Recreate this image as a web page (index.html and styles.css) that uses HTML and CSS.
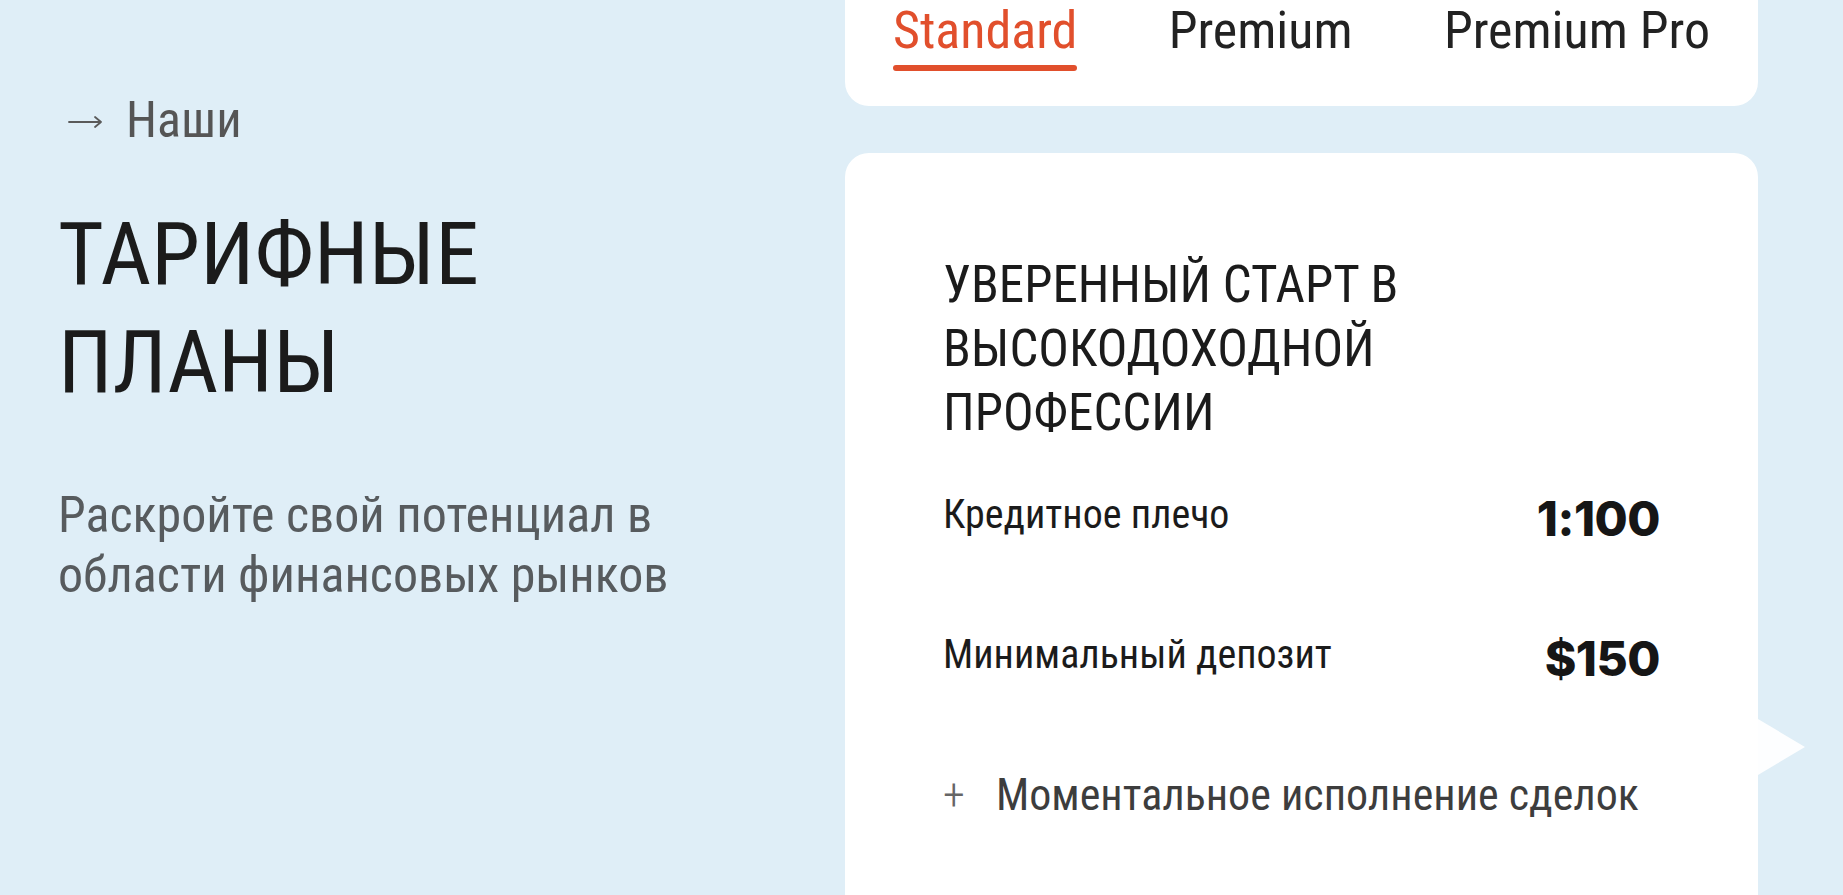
FILE: index.html
```html
<!DOCTYPE html>
<html lang="ru">
<head>
<meta charset="utf-8">
<title>Тарифные планы</title>
<link rel="stylesheet" href="styles.css">
</head>
<body>
<div class="page">
  <section class="intro">
    <p class="eyebrow">
      <svg class="eyebrow-arrow" viewBox="0 0 35 14" width="35" height="14" aria-hidden="true">
        <path d="M1 7 H33 M27 2 L33 7 L27 12" fill="none" stroke="#5a5a5a" stroke-width="1.8" stroke-linecap="round" stroke-linejoin="round"/>
      </svg>
      <span>Наши</span>
    </p>
    <h1 class="title">ТАРИФНЫЕ<br>ПЛАНЫ</h1>
    <p class="lead">Раскройте свой потенциал в<br>области финансовых рынков</p>
  </section>

  <section class="plans">
    <nav class="tabs">
      <a class="tab tab-active">Standard</a>
      <a class="tab">Premium</a>
      <a class="tab">Premium Pro</a>
    </nav>

    <article class="plan">
      <h2 class="plan-title">УВЕРЕННЫЙ СТАРТ В<br>ВЫСОКОДОХОДНОЙ<br>ПРОФЕССИИ</h2>
      <div class="plan-row">
        <span class="plan-label">Кредитное плечо</span>
        <span class="plan-value">1:100</span>
      </div>
      <div class="plan-row plan-row-second">
        <span class="plan-label">Минимальный депозит</span>
        <span class="plan-value">$150</span>
      </div>
      <ul class="plan-features">
        <li><span class="plus">+</span>Моментальное исполнение сделок</li>
      </ul>
      <span class="plan-next" aria-hidden="true"></span>
    </article>
  </section>
</div>
</body>
</html>
```

FILE: styles.css
```css
html, body {
  margin: 0;
  padding: 0;
  background: #dfeef7;
}

body {
  font-family: "Liberation Sans Narrow", "Roboto Condensed", "Roboto", sans-serif;
  color: #1b1b1b;
}

.page {
  height: 100vh;
  overflow: hidden;
  display: grid;
  grid-template-columns: 1fr 913px;
  padding: 0 85px 0 58px;
  box-sizing: border-box;
}

/* ---------- left column ---------- */
.intro {
  padding-top: 90px;
}

.eyebrow {
  margin: 0;
  display: flex;
  align-items: center;
  gap: 23px;
  font-size: 50px;
  line-height: 60px;
  color: #555;
  padding-left: 10px;
}

.eyebrow-arrow {
  flex: none;
  margin-top: 4px;
}

.title {
  margin: 50px 0 0;
  font-size: 88px;
  line-height: 108px;
  font-weight: 400;
  color: #1b1b1b;
}

.lead {
  margin: 69px 0 0;
  font-size: 50px;
  line-height: 60px;
  color: #575b5e;
}

/* ---------- right column ---------- */
.plans {
  display: flex;
  flex-direction: column;
}

.tabs {
  background: #fff;
  border-radius: 0 0 24px 24px;
  display: flex;
  justify-content: space-between;
  align-items: flex-start;
  padding: 1px 48px 35px;
}

.tab {
  display: block;
  font-size: 52px;
  line-height: 60px;
  color: #222;
}

.tab-active {
  color: #e14f2c;
}

.tab-active::after {
  content: "";
  display: block;
  height: 6px;
  margin-top: 4px;
  border-radius: 3px;
  background: #e14f2c;
}

.plan {
  position: relative;
  margin-top: 47px;
  background: #fff;
  border-radius: 24px 24px 0 0;
  padding: 100px 98px 200px;
}

.plan-title {
  margin: 0;
  font-size: 51px;
  line-height: 64px;
  font-weight: 400;
  color: #1b1b1b;
}

.plan-row {
  margin-top: 44px;
  height: 60px;
  display: flex;
  align-items: center;
  justify-content: space-between;
}

.plan-row-second {
  margin-top: 80px;
}

.plan-label {
  font-size: 40px;
  line-height: 50px;
  color: #1b1b1b;
  margin-top: -8px;
}

.plan-value {
  font-family: "Inter", "Liberation Sans", sans-serif;
  font-weight: 800;
  font-size: 48px;
  line-height: 60px;
  letter-spacing: -0.5px;
  color: #161616;
}

.plan-features {
  list-style: none;
  margin: 78px 0 0;
  padding: 0;
  font-size: 44px;
  line-height: 56px;
  color: #3d3d3d;
  white-space: nowrap;
}

.plus {
  display: inline-block;
  width: 53px;
  color: #666;
  font-weight: 300;
}

.plan-next {
  position: absolute;
  left: 100%;
  top: 566px;
  width: 0;
  height: 0;
  border-left: 47px solid rgba(255, 255, 255, 0.92);
  border-top: 28px solid transparent;
  border-bottom: 28px solid transparent;
}
```
